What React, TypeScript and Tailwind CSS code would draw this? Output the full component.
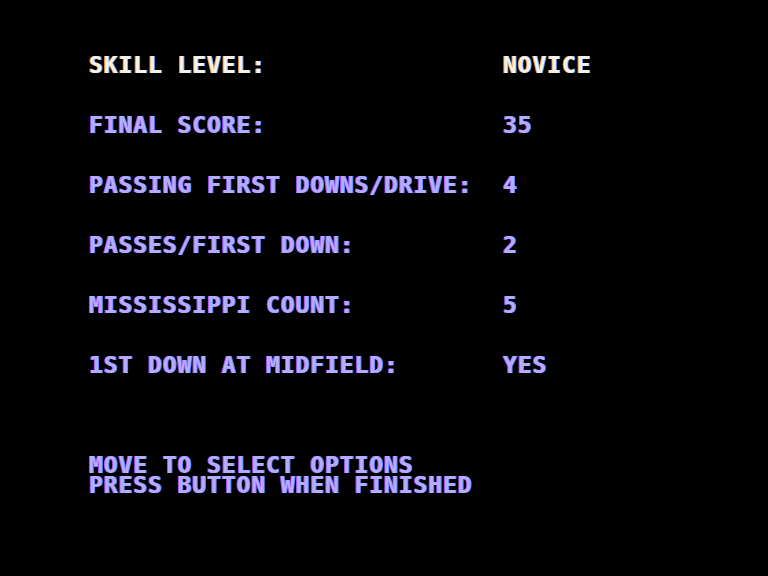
const rows = [
  { label: "SKILL LEVEL:", value: "NOVICE", active: true },
  { label: "FINAL SCORE:", value: "35" },
  { label: "PASSING FIRST DOWNS/DRIVE:", value: "4" },
  { label: "PASSES/FIRST DOWN:", value: "2" },
  { label: "MISSISSIPPI COUNT:", value: "5" },
  { label: "1ST DOWN AT MIDFIELD:", value: "YES" },
];

const font = "font-['DejaVu_Sans_Mono',monospace] font-bold text-[23px] leading-[20px] tracking-[0.9px] whitespace-pre";
const lavender = "text-[#b6acff] [text-shadow:-1px_0_#9a50ff,1px_0_#5a8cff]";
const cream = "text-[#f6f1e4] [text-shadow:-1px_0_#e0904c,1px_0_#6aa8ff]";

export default function App() {
  return (
    <div className="w-[768px] h-[576px] bg-black overflow-hidden">
      <div className={`pt-[55px] pl-[89px] blur-[0.4px] ${font}`}>
        <div className="flex flex-col gap-[40px]">
          {rows.map((r) => (
            <div key={r.label} className={`flex ${r.active ? cream : lavender}`}>
              <span className="w-[414px]">{r.label}</span>
              <span>{r.value}</span>
            </div>
          ))}
        </div>
        <div className={`mt-[80px] ${lavender}`}>
          <div>MOVE TO SELECT OPTIONS</div>
          <div>PRESS BUTTON WHEN FINISHED</div>
        </div>
      </div>
    </div>
  );
}
